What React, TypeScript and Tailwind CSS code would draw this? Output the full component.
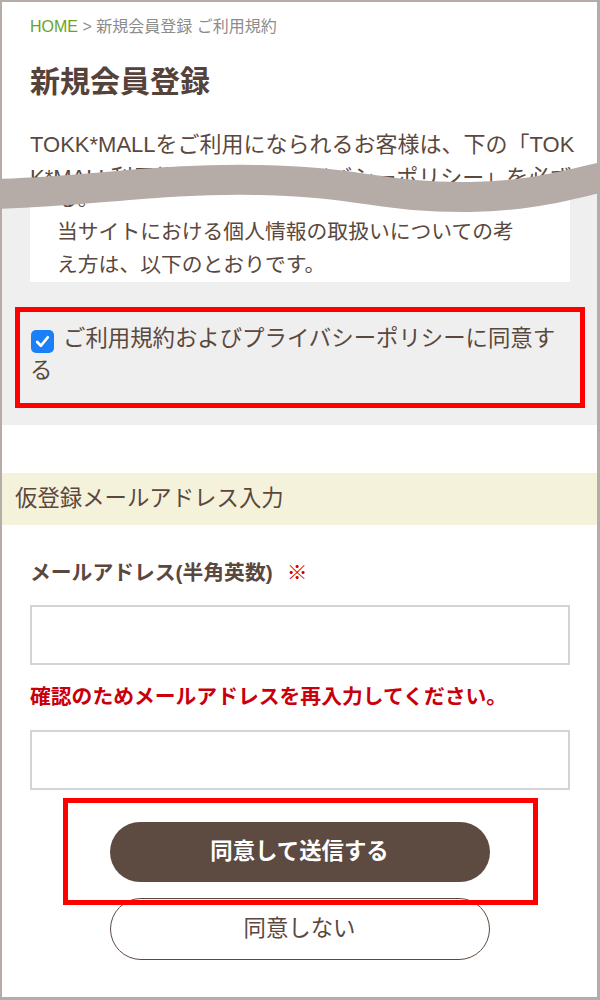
const BROWN = "text-[#5a483e]";

export default function App() {
  return (
    <div
      className={`relative h-[1000px] w-[600px] overflow-hidden border-t-2 border-r-[3px] border-b-[3px] border-l-2 border-[#b5aca7] bg-white font-['Liberation_Sans','Noto_Sans_CJK_JP',sans-serif] ${BROWN}`}
    >
      <TermsHeader />
      <AgreeArea />
      <WaveCut />
      <EmailForm />
    </div>
  );
}

const TermsHeader: React.FC = () => {
  return (
    <div className="h-[183px] overflow-hidden px-[28px] pt-[13px]">
      <p className="text-[16px] leading-[24px] text-[#8c8c8c]">
        <span className="text-[#6aa31e]">HOME</span> &gt; 新規会員登録 ご利用規約
      </p>
      <h1 className="mt-[23px] text-[30px] font-bold leading-[40px] text-[#55423a]">
        新規会員登録
      </h1>
      <p className="mt-[26px] whitespace-nowrap text-[22px] leading-[33px]">
        TOKK*MALLをご利用になられるお客様は、下の「TOK
        <br />
        K*MALL利用規約」と「プライバシーポリシー」を必ずお読みください。
      </p>
    </div>
  );
};

const AgreeArea: React.FC = () => {
  return (
    <div className="bg-[#efefef] pb-[17px]">
      {/* scroll box with the policy text */}
      <div className="ml-[28px] h-[97px] w-[540px] overflow-hidden bg-white pl-[27px]">
        <p className="-mt-[3px] whitespace-nowrap text-[20.8px] leading-[33px]">
          る。
          <br />
          当サイトにおける個人情報の取扱いについての考
          <br />
          え方は、以下のとおりです。
        </p>
      </div>

      <div className="mt-[25px] ml-[13px] w-[570px] border-[5px] border-[#ff0000] pt-[11px] pr-[10px] pb-[16px] pl-[10px]">
        <p className="text-[22.4px] leading-[32px]">
          <span className="mr-[9px] ml-[1px] inline-flex h-[23px] w-[23px] items-center justify-center rounded-[5px] bg-[#1b7ff7] align-[-4px]">
            <svg width="17" height="17" viewBox="0 0 16 16" fill="none">
              <path
                d="M3 8.5 L6.5 12 L13 4"
                stroke="white"
                strokeWidth="2.6"
                strokeLinecap="round"
                strokeLinejoin="round"
              />
            </svg>
          </span>
          ご利用規約およびプライバシーポリシーに同意す
          <br />る
        </p>
      </div>
    </div>
  );
};

// grey torn-paper band showing the page was cut
const WaveCut: React.FC = () => {
  return (
    <svg
      className="pointer-events-none absolute top-0 left-0"
      width="600"
      height="240"
      viewBox="0 0 600 240"
    >
      <path
        d="M-10 192 C 90 190, 150 176, 258 178 C 360 180, 380 196, 468 195 C 530 194, 560 184, 610 173"
        stroke="#b5aca7"
        strokeWidth="30"
        fill="none"
      />
    </svg>
  );
};

const EmailForm: React.FC = () => {
  return (
    <>
      <div className="mt-[48px] flex h-[52px] items-center bg-[#f5f2dc] pl-[13px] text-[22.4px]">
        仮登録メールアドレス入力
      </div>

      <div className="px-[28px]">
        <p className="mt-[33px] text-[20.8px] font-bold leading-[30px]">
          メールアドレス(半角英数)
          <span className="ml-[14px] text-[#d60000]">※</span>
        </p>
        <input
          type="email"
          className="mt-[17px] block h-[60px] w-[540px] border-2 border-[#d4d4d4] bg-white"
        />
        <p className="mt-[17px] text-[20.8px] font-bold leading-[30px] text-[#c9000b]">
          確認のためメールアドレスを再入力してください。
        </p>
        <input
          type="email"
          className="mt-[18px] block h-[60px] w-[540px] border-2 border-[#d4d4d4] bg-white"
        />
      </div>

      <div className="relative mx-auto mt-[32px] w-[380px]">
        <button className="block h-[60px] w-full rounded-full bg-[#5d4a40] text-[22.4px] font-bold text-white">
          同意して送信する
        </button>
        <div className="pointer-events-none absolute top-[-24px] left-[-47px] z-10 h-[107px] w-[475px] border-[5px] border-[#ff0000]" />
      </div>
      <button className="mx-auto mt-[16px] block h-[62px] w-[380px] rounded-full border-[1.5px] border-[#5d4a40] bg-white text-[22.4px]">
        同意しない
      </button>
    </>
  );
};
